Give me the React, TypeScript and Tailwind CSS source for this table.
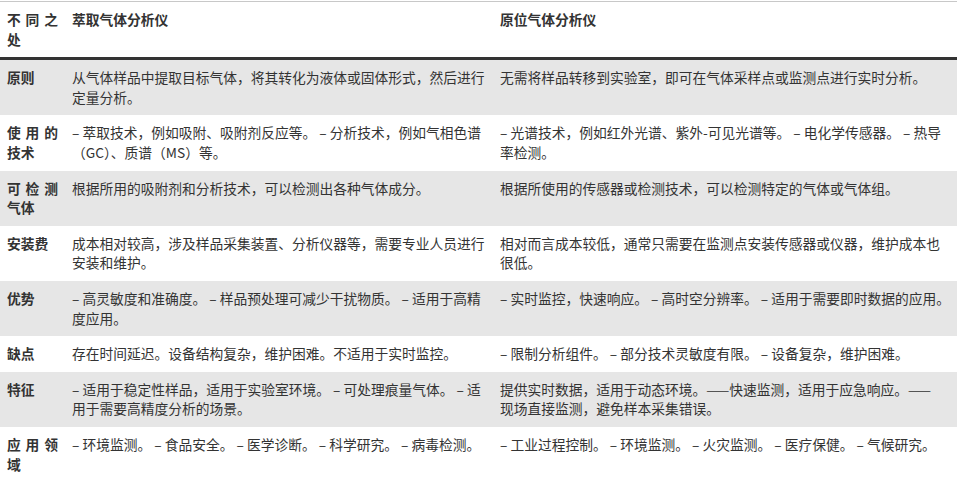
const rows: { label: string; a: string; b: string }[] = [
  {
    label: '原则',
    a: '从气体样品中提取目标气体，将其转化为液体或固体形式，然后进行定量分析。',
    b: '无需将样品转移到实验室，即可在气体采样点或监测点进行实时分析。',
  },
  {
    label: '使用的技术',
    a: '– 萃取技术，例如吸附、吸附剂反应等。 – 分析技术，例如气相色谱（GC）、质谱（MS）等。',
    b: '– 光谱技术，例如红外光谱、紫外-可见光谱等。 – 电化学传感器。 – 热导\n率检测。',
  },
  {
    label: '可检测气体',
    a: '根据所用的吸附剂和分析技术，可以检测出各种气体成分。',
    b: '根据所使用的传感器或检测技术，可以检测特定的气体或气体组。',
  },
  {
    label: '安装费',
    a: '成本相对较高，涉及样品采集装置、分析仪器等，需要专业人员进行安装和维护。',
    b: '相对而言成本较低，通常只需要在监测点安装传感器或仪器，维护成本也\n很低。',
  },
  {
    label: '优势',
    a: '– 高灵敏度和准确度。 – 样品预处理可减少干扰物质。 – 适用于高精度应用。',
    b: '– 实时监控，快速响应。 – 高时空分辨率。 – 适用于需要即时数据的应用。',
  },
  {
    label: '缺点',
    a: '存在时间延迟。设备结构复杂，维护困难。不适用于实时监控。',
    b: '– 限制分析组件。 – 部分技术灵敏度有限。 – 设备复杂，维护困难。',
  },
  {
    label: '特征',
    a: '– 适用于稳定性样品，适用于实验室环境。 – 可处理痕量气体。 – 适用于需要高精度分析的场景。',
    b: '提供实时数据，适用于动态环境。——快速监测，适用于应急响应。——\n现场直接监测，避免样本采集错误。',
  },
  {
    label: '应用领域',
    a: '– 环境监测。 – 食品安全。 – 医学诊断。 – 科学研究。 – 病毒检测。',
    b: '– 工业过程控制。 – 环境监测。 – 火灾监测。 – 医疗保健。 – 气候研究。',
  },
]

export default function App() {
  return (
    <div className="w-[957px] h-[483px] overflow-hidden bg-white pt-px font-['Noto_Sans_CJK_SC','Noto_Sans',sans-serif] text-[13.75px] leading-[19.6px] text-[#333]">
      <table className="w-full table-fixed border-collapse border-t border-[#c8c8c8]">
        <colgroup>
          <col className="w-[65px]" />
          <col className="w-[428px]" />
          <col />
        </colgroup>
        <thead>
          <tr className="border-b-[3px] border-[#333]">
            <th className="px-[7px] py-2 text-justify align-top font-bold">不同之处</th>
            <th className="pl-[7px] pr-[2px] py-2 text-left align-top font-bold">萃取气体分析仪</th>
            <th className="pl-[7px] pr-0 py-2 text-left align-top font-bold">原位气体分析仪</th>
          </tr>
        </thead>
        <tbody>
          {rows.map((r, i) => (
            <tr key={r.label} className={i % 2 === 0 ? 'bg-[#e6e6e6]' : 'bg-white'}>
              <td className="px-[7px] py-2 text-justify align-top font-bold">{r.label}</td>
              <td className="pl-[7px] pr-[2px] py-2 align-top">{r.a}</td>
              <td className="pl-[7px] pr-0 py-2 align-top whitespace-pre-line">{r.b}</td>
            </tr>
          ))}
        </tbody>
      </table>
    </div>
  )
}
